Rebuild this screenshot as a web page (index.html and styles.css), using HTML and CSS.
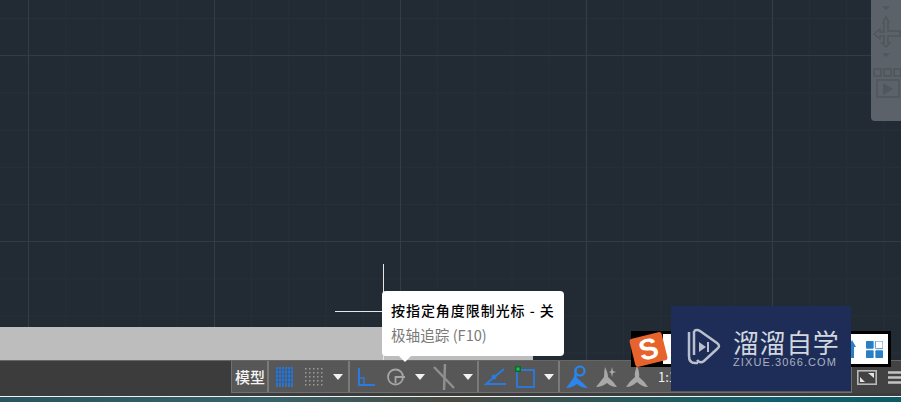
FILE: index.html
```html
<!DOCTYPE html>
<html lang="zh">
<head>
<meta charset="utf-8">
<title>AutoCAD 状态栏</title>
<link rel="stylesheet" href="styles.css">
</head>
<body>
<div class="page">
  <main class="canvas">
    <aside class="palette">
      <svg class="pal-icon" width="30" height="110" viewBox="0 0 30 110" fill="none" stroke="#50565c" stroke-width="1.500">
        <path d="M15 9l-2 -2h4z" fill="#50565c"/>
        <path d="M15 17l3 5h-1v9h12v5H17v7h2l-4 4-4-4h2v-7H9v3l-6-5 6-5v3h4v-9h-1z"/>
        <path d="M15 56l-2 -2h4z" fill="#50565c"/>
        <rect x="3" y="69" width="7" height="7"/><rect x="13" y="69" width="7" height="7"/><rect x="23" y="69" width="7" height="7"/>
        <rect x="6" y="80" width="22" height="17"/>
        <path d="M12 83l10 6-10 6z" fill="#50565c" stroke="none"/>
      </svg>
    </aside>
    <div class="cross-v"></div>
    <div class="cross-h"></div>
    <div class="tooltip">
      <div class="tip-title">按指定角度限制光标 - 关</div>
      <div class="tip-sub">极轴追踪 (F10)</div>
      <span class="tip-arrow"></span>
    </div>
    <div class="band"></div>
  </main>
  <footer class="status">
    <div class="toolbar">
      <div class="sec model">模型</div>
      <div class="sec sec-snap">
        <span class="btn"><svg width="18" height="20" viewBox="0 0 18 20" stroke="#2a7be0" stroke-width="1.6"><path d="M2 0v20M5 0v20M8 0v20M11 0v20M14 0v20M17 0v20"/><path stroke-width="1" stroke="#1c60b8" d="M0 3h18M0 7h18M0 11h18M0 15h18"/></svg></span>
        <span class="btn"><svg width="18" height="18" viewBox="0 0 18 18" fill="#9b9b9b"><g id="d"><rect x="0" y="0" width="1.5" height="1.5"/><rect x="4" y="0" width="1.5" height="1.5"/><rect x="8" y="0" width="1.5" height="1.5"/><rect x="12" y="0" width="1.5" height="1.5"/><rect x="16" y="0" width="1.5" height="1.5"/></g><use href="#d" y="4"/><use href="#d" y="8"/><use href="#d" y="12"/><use href="#d" y="16"/></svg></span>
        <span class="arr"></span>
      </div>
      <div class="sec sec-polar">
        <span class="btn"><svg width="18" height="18" viewBox="0 0 18 18" fill="none" stroke="#2a7be0" stroke-width="2"><path d="M2 0v17h16"/><path d="M2 10h5v7" stroke-width="1.4"/></svg></span>
        <span class="btn"><svg width="20" height="20" viewBox="0 0 20 20" fill="none" stroke="#a5a5a5" stroke-width="1.8"><circle cx="9.500" cy="10" r="7.500"/><path d="M9.500 16V10h9.500"/></svg></span>
        <span class="arr"></span>
        <span class="btn"><svg width="22" height="26" viewBox="0 0 22 26" fill="none" stroke="#8f8f8f" stroke-width="2.500"><path d="M12 0L11 26"/><path d="M1 3l20 21"/></svg></span>
        <span class="arr"></span>
      </div>
      <div class="sec sec-osnap">
        <span class="btn"><svg width="22" height="18" viewBox="0 0 22 18" fill="none" stroke="#2a7be0" stroke-width="1.8"><path d="M20 1L2 16h20"/><circle cx="10" cy="9" r="1.500" fill="#2a7be0"/></svg></span>
        <span class="btn"><svg width="20" height="22" viewBox="0 0 20 22" fill="none"><rect x="2" y="4" width="17" height="17" stroke="#2a7be0" stroke-width="1.800"/><rect x="0" y="0" width="6" height="6" fill="#0d6b2a"/><rect x="1.500" y="1.500" width="3" height="3" fill="#1fc24a"/></svg></span>
        <span class="arr"></span>
      </div>
      <div class="sec last">
        <span class="btn"><svg width="22" height="24" viewBox="0 0 22 24"><circle cx="14" cy="6" r="4.500" fill="none" stroke="#2a86ee" stroke-width="2.200"/><path d="M8 3Q11 10 11 13Q16 17 22 23Q15 23 11 19Q6 23 0 23Q5 17 8 12Q9 8 8 3z" fill="#2a86ee"/></svg></span>
        <span class="btn"><svg width="22" height="22" viewBox="0 0 22 22" fill="#a8a8a8"><path d="M9 1Q12 7 12 11Q17 15 21 21Q15 21 11 17Q6 21 0 21Q4 16 8 11Q8 6 9 1z"/><path d="M16 1l1 4 3 1-3 1-1 4-1-4-2-1 2-1z"/></svg></span>
        <span class="btn"><svg width="22" height="22" viewBox="0 0 22 22" fill="#a8a8a8"><path d="M11 0Q14 7 13 11Q18 15 22 21Q16 21 11 16Q6 21 0 21Q4 15 9 11Q8 7 11 0z"/></svg></span>
        <span class="scale">1:1</span>
      </div>
    </div>
    <div class="tail">
      <svg class="tail-max" width="20" height="15" viewBox="0 0 20 15" fill="none"><rect x="0.800" y="0.800" width="18.400" height="13.400" stroke="#b8b8b8" stroke-width="1.600"/><path d="M3 12l0-5 5 5zM17 3l-6 0 6 5z" fill="#e4e4e4"/></svg>
      <svg width="13" height="13" viewBox="0 0 13 13" stroke="#c4c4c4" stroke-width="2.500"><path d="M0 1.500h13M0 6.500h13M0 11.500h13"/></svg>
    </div>
  </footer>
  <div class="white-line"></div>
  <div class="desktop"></div>
  <div class="ime">
    <div class="ime-logo"><span class="ime-s">S</span></div>
    <div class="ime-body">
      <svg width="8" height="18" viewBox="0 0 8 18" fill="#2a7fc4"><path d="M4 0l4 7H6v11H2V7H0z"/></svg>
      <svg class="ime-grid" width="17" height="17" viewBox="0 0 20 20" fill="#2a7fc4"><rect x="0" y="0" width="9" height="9" rx="1"/><rect x="11" y="0" width="9" height="9" rx="1" fill="#fff" stroke="#2a7fc4"/><rect x="0" y="11" width="9" height="9" rx="1"/><rect x="11" y="11" width="9" height="9" rx="1"/></svg>
    </div>
  </div>
  <div class="mark">
    <svg width="36" height="38" viewBox="0 0 36 38" fill="none" stroke="#b9c0cd" stroke-width="2.500"><path d="M4 4v24q0 7 6 7h3"/><path d="M9 3q3-2 6 0l17 12q4 3 0 6l-13 12q-4 3-7-1"/><path d="M9 3v24"/><path d="M14 14l7 5-7 5z" fill="#b9c0cd" stroke="none"/><path d="M23 14v10" stroke-width="2"/></svg>
    <div class="mark-text">
      <div class="mark-cn">溜溜自学</div>
      <div class="mark-en">ZIXUE.3066.COM</div>
    </div>
  </div>
</div>
</body>
</html>
```
FILE: styles.css
```css
* { box-sizing: border-box; }
html, body { margin: 0; padding: 0; }
body { width: 901px; height: 402px; overflow: hidden; background: #222a33; font-family: "Noto Sans CJK SC", "Noto Sans", sans-serif; }
.page { position: relative; width: 901px; height: 402px; display: flex; flex-direction: column; overflow: hidden; }

.canvas {
  position: relative; flex: 1; display: flex; flex-direction: column; justify-content: flex-end;
  background-color: #222a33;
  background-image:
    linear-gradient(90deg, #343c46 1px, transparent 1px),
    linear-gradient(180deg, #333b45 1px, transparent 1px),
    linear-gradient(90deg, #262e37 1px, transparent 1px),
    linear-gradient(180deg, #272f38 1px, transparent 1px);
  background-size: 186px 100%, 100% 186px, 37.2px 100%, 100% 37.2px;
  background-position: 28px 0, 0 55px, 28px 0, 0 18px;
}
.band { width: 533px; height: 33px; background: #bdbdbd; }

.palette { position: absolute; top: 0; right: 0; width: 30px; height: 121px; background: #5c6269; border-bottom-left-radius: 4px; }
.pal-icon { display: block; }

.cross-v { position: absolute; left: 383px; top: 264px; width: 1px; height: 96px; background: #e6e6e6; }
.cross-h { position: absolute; left: 335px; top: 311px; width: 48px; height: 1px; background: #e6e6e6; }

.tooltip { position: absolute; left: 382px; top: 291px; width: 182px; height: 65px; padding: 9px 9px 0; background: #fff; border-radius: 4px; }
.tip-title { font-size: 14px; line-height: 20px; font-weight: 500; letter-spacing: 0.95px; color: #000; white-space: nowrap; }
.tip-sub { margin-top: 5px; font-size: 14.6px; line-height: 20px; color: #7a7a7a; white-space: nowrap; }
.tip-arrow { position: absolute; left: 17px; top: 65px; width: 0; height: 0; border: 6px solid transparent; border-top-color: #fff; border-bottom: 0; }

.status { height: 36px; flex: none; display: flex; align-items: flex-start; padding-left: 231px; background: #3c3c3c; border-top: 1px solid #666; }
.toolbar { width: 621px; height: 32px; display: flex; background: #575757; border: 1px solid #707070; border-top: 0; }
.sec { display: flex; align-items: center; border-right: 2px solid #7a7a7a; }
.sec.last { flex: 1; padding-left: 2px; border-right: 0; }
.sec-snap { padding-right: 1px; }
.sec-polar, .sec-osnap { padding-left: 1px; }
.model { width: 37px; padding-left: 1px; justify-content: center; color: #f5f5f5; font-size: 15px; font-weight: 500; white-space: nowrap; }
.btn { width: 30px; display: flex; align-items: center; justify-content: center; }
.btn svg { display: block; }
.arr { width: 18px; display: flex; justify-content: center; }
.arr::before { content: ""; border: 5px solid transparent; border-top: 6px solid #f2f2f2; border-bottom: 0; }
.scale { margin-left: 6px; color: #f0f0f0; font-size: 13px; }
.tail { flex: 1; height: 32px; display: flex; align-items: center; gap: 11px; padding-left: 5px; background: #424242; }
.tail svg { flex: none; }

.white-line { height: 1px; flex: none; background: #f2f2f2; }
.desktop { height: 5px; flex: none; background: linear-gradient(90deg, #2a5560, #38636a 30%, #4a4a42 50%, #10626e 85%, #0e5a66); }

.ime { position: absolute; left: 631px; top: 331px; width: 260px; height: 36px; display: flex; background: #000; padding: 3px; }
.ime-logo { width: 29px; display: flex; align-items: center; justify-content: center; }
.ime-s { flex: none; width: 33px; height: 29px; display: flex; align-items: center; justify-content: center; transform: rotate(-14deg); background: #e8622b; border-radius: 3px; color: #fff; font: 700 29px/29px "Liberation Sans", sans-serif; }
.ime-body { flex: 1; display: flex; align-items: center; justify-content: flex-end; gap: 10px; padding-right: 5px; background: #fff; }

.mark { position: absolute; left: 671px; top: 306px; width: 180px; height: 85px; display: flex; gap: 11px; padding: 22px 0 0 14px; background: #1e2d58; }
.mark-text { display: flex; flex-direction: column; margin: 1px 0 0 1px; }
.mark-cn { font-size: 26px; line-height: 26px; font-weight: 400; letter-spacing: 0.6px; color: #d3d7df; white-space: nowrap; }
.mark-en { font: 400 11px/14px "Liberation Sans", sans-serif; letter-spacing: 1.1px; color: #aab1c0; white-space: nowrap; }
```
